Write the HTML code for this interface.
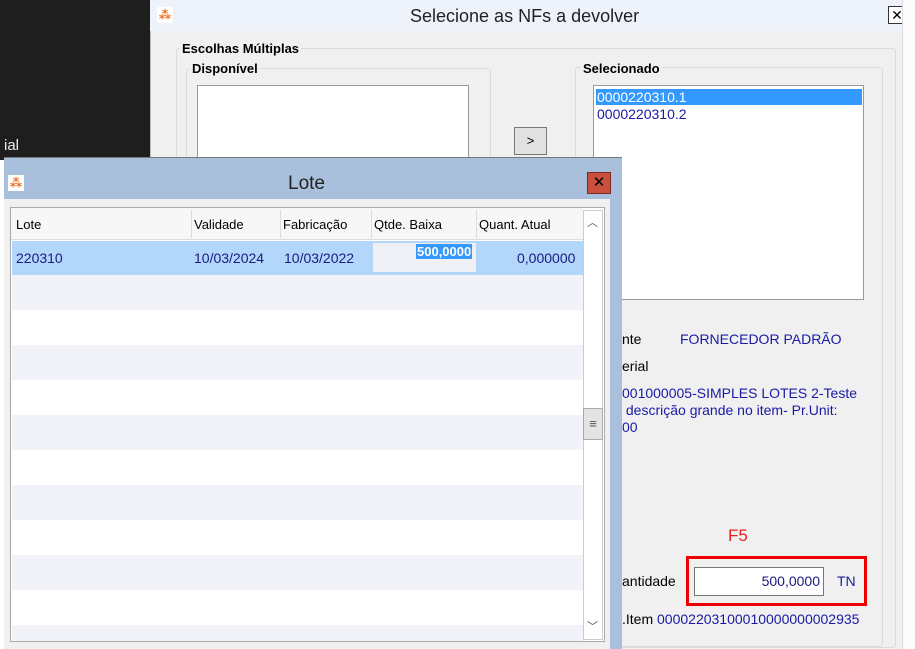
<!DOCTYPE html><html><head><meta charset="utf-8"><style>
*{margin:0;padding:0;box-sizing:border-box}
body{width:915px;height:649px;position:relative;overflow:hidden;background:#fff;font-family:"Liberation Sans","DejaVu Sans",sans-serif;font-size:13px;color:#000}
.a{position:absolute}
.b{font-weight:bold}
.blue{color:#1a1aa6}
.ico{width:16px;height:16px;background:#fff;color:#f07020;font-size:12px;font-weight:bold;text-align:center;line-height:16px}
</style></head><body>
<div class="a" style="left:0;top:0;width:150px;height:160px;background:#1e1e1e"></div>
<div class="a" style="left:4px;top:137px;color:#eee;font-size:15px">ial</div>
<div class="a" style="left:150px;top:0;width:752px;height:649px;background:#f0f0f0;border-left:1px solid #bbb"></div>
<div class="a" style="left:150px;top:0;width:752px;height:31px;background:#eef3fb"></div>
<div class="a ico" style="left:157px;top:7px">⁂</div>
<div class="a" style="left:410px;top:6px;font-size:18px;color:#222">Selecione as NFs a devolver</div>
<div class="a" style="left:888px;top:6px;width:18px;height:18px;border:1px solid #333;background:#fff;font-weight:bold;font-size:14px;text-align:center;line-height:16px">✕</div>
<div class="a" style="left:902px;top:0;width:13px;height:649px;background:#fbfbfb;border-left:1px solid #ddd"></div>
<div class="a" style="left:176px;top:48px;width:720px;height:600px;border:1px solid #dcdcdc;border-radius:3px"></div>
<div class="a b" style="left:180px;top:41px;background:#f0f0f0;padding:0 2px">Escolhas Múltiplas</div>
<div class="a" style="left:186px;top:68px;width:305px;height:120px;border:1px solid #dcdcdc;border-radius:3px"></div>
<div class="a b" style="left:190px;top:61px;background:#f0f0f0;padding:0 2px">Disponível</div>
<div class="a" style="left:197px;top:85px;width:272px;height:80px;background:#fff;border:1px solid #999"></div>
<div class="a" style="left:514px;top:127px;width:33px;height:28px;border:1px solid #777;background:#e1e1e1;text-align:center;line-height:26px">&gt;</div>
<div class="a" style="left:575px;top:67px;width:308px;height:580px;border:1px solid #dcdcdc;border-radius:3px"></div>
<div class="a b" style="left:581px;top:61px;background:#f0f0f0;padding:0 2px">Selecionado</div>
<div class="a" style="left:593px;top:85px;width:271px;height:215px;background:#fff;border:1px solid #999"></div>
<div class="a" style="left:596px;top:89px;width:266px;height:16px;background:#3399ff;color:#fff;font-size:14px;padding-left:1px">0000220310.1</div>
<div class="a blue" style="left:597px;top:106px;font-size:14px">0000220310.2</div>
<div class="a" style="left:622px;top:331px;font-size:14px">nte</div>
<div class="a blue" style="left:680px;top:331px;font-size:14px">FORNECEDOR PADRÃO</div>
<div class="a" style="left:622px;top:358px;font-size:14px">erial</div>
<div class="a blue" style="left:622px;top:385px;font-size:14px;line-height:17px">001000005-SIMPLES LOTES 2-Teste<br>&nbsp;descrição grande no item- Pr.Unit:<br>00</div>
<div class="a" style="left:728px;top:526px;color:#e82020;font-size:17px">F5</div>
<div class="a" style="left:686px;top:556px;width:181px;height:50px;border:3px solid #e00"></div>
<div class="a" style="left:622px;top:573px;font-size:14px">antidade</div>
<div class="a" style="left:694px;top:567px;width:130px;height:29px;background:#fff;border:1px solid #777;text-align:right;padding:5px 3px 0 0;font-size:14px;color:#1a1a80">500,0000</div>
<div class="a blue" style="left:837px;top:573px;font-size:14px">TN</div>
<div class="a" style="left:622px;top:611px;font-size:14px">.Item <span class="blue">00002203100010000000002935</span></div>

<div class="a" style="left:4px;top:157px;width:618px;height:492px;background:#a8c0db;border-top:1px solid #777"></div>
<div class="a ico" style="left:8px;top:175px">⁂</div>
<div class="a" style="left:288px;top:173px;font-size:19px;color:#222">Lote</div>
<div class="a" style="left:587px;top:172px;width:24px;height:22px;background:#c9503f;border:1px solid #7a2a20;color:#000;font-weight:bold;text-align:center;line-height:20px;font-size:15px">✕</div>
<div class="a" style="left:4px;top:199px;width:606px;height:450px;background:#f0f0f0"></div>
<div class="a" style="left:10px;top:207px;width:595px;height:435px;border:1px solid #aaa;background:#fff;overflow:hidden">
<div class="a" style="left:0;top:0;width:572px;height:32px;background:#f7f7f7;border-bottom:1px solid #ddd"></div>
<div class="a" style="left:5px;top:9px">Lote</div>
<div class="a" style="left:183px;top:9px">Validade</div>
<div class="a" style="left:272px;top:9px">Fabricação</div>
<div class="a" style="left:363px;top:9px">Qtde. Baixa</div>
<div class="a" style="left:468px;top:9px">Quant. Atual</div>
<div class="a" style="left:180px;top:2px;width:1px;height:28px;background:#ddd"></div>
<div class="a" style="left:269px;top:2px;width:1px;height:28px;background:#ddd"></div>
<div class="a" style="left:360px;top:2px;width:1px;height:28px;background:#ddd"></div>
<div class="a" style="left:465px;top:2px;width:1px;height:28px;background:#ddd"></div>
<div class="a" style="left:1px;top:33px;width:571px;height:34px;background:#b3d7fb"></div>
<div class="a" style="left:5px;top:42px;color:#1a1a80;font-size:14px">220310</div>
<div class="a" style="left:183px;top:42px;color:#1a1a80;font-size:14px">10/03/2024</div>
<div class="a" style="left:273px;top:42px;color:#1a1a80;font-size:14px">10/03/2022</div>
<div class="a" style="left:362px;top:35px;width:103px;height:29px;background:#eef0f5"></div>
<div class="a" style="left:405px;top:36px;background:#3399ff;color:#fff;font-weight:bold;font-size:13px;padding:0 1px">500,0000</div>
<div class="a" style="left:506px;top:42px;color:#1a1a80;font-size:14px">0,000000</div>
<div class="a" style="left:1px;top:67px;width:571px;height:35px;background:#f2f3f8"></div>
<div class="a" style="left:1px;top:137px;width:571px;height:35px;background:#f2f3f8"></div>
<div class="a" style="left:1px;top:207px;width:571px;height:35px;background:#f2f3f8"></div>
<div class="a" style="left:1px;top:277px;width:571px;height:35px;background:#f2f3f8"></div>
<div class="a" style="left:1px;top:347px;width:571px;height:35px;background:#f2f3f8"></div>
<div class="a" style="left:1px;top:417px;width:571px;height:35px;background:#f2f3f8"></div>
<div class="a" style="left:572px;top:2px;width:20px;height:430px;background:#fff;border:1px solid #ccc"></div>
<div class="a" style="left:576px;top:6px;font-size:11px;color:#555">︿</div>
<div class="a" style="left:572px;top:200px;width:20px;height:32px;background:#e4e4e4;border:1px solid #aaa;text-align:center;line-height:30px;color:#555">≡</div>
<div class="a" style="left:576px;top:410px;font-size:11px;color:#555">﹀</div>
</div>
<div class="a" style="left:614px;top:199px;width:8px;height:450px;background:#a8c0db"></div>
</body></html>
